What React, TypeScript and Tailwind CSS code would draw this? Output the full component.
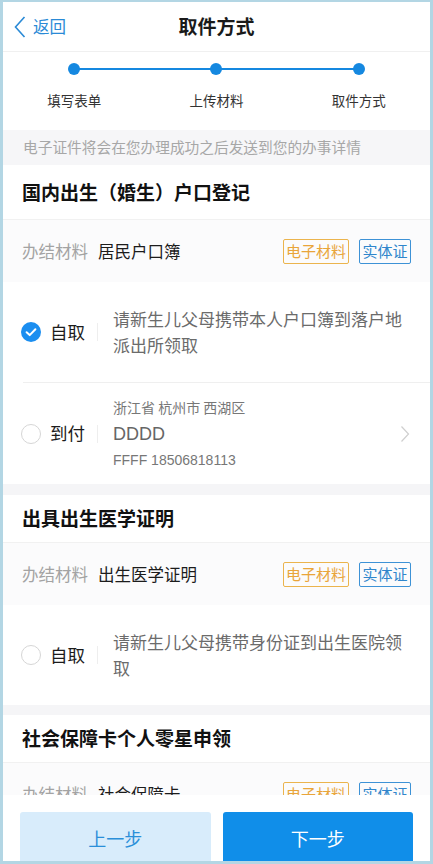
import React from 'react';

const font = { fontFamily: '"Noto Sans CJK SC", "Noto Sans", sans-serif' };

const Badges = () => (
  <div className="flex items-center gap-[10px]">
    <span className="h-[25px] w-[66px] flex items-center justify-center border border-[#ebb44d] rounded-[2px] text-[15px] text-[#e9a53a]">电子材料</span>
    <span className="h-[25px] w-[52px] flex items-center justify-center border border-[#3d92d6] rounded-[2px] text-[15px] text-[#2f86cc]">实体证</span>
  </div>
);

const Material = ({ name }: { name: string }) => (
  <div className="h-[62px] shrink-0 flex items-center justify-between pl-[19px] pr-[19px] bg-[#fbfbfc]">
    <div className="flex items-center text-[16.5px]">
      <span className="text-[#a3a3a3]">办结材料</span>
      <span className="ml-[10px] text-[#1c1c1c]">{name}</span>
    </div>
    <Badges />
  </div>
);

const Radio = ({ checked }: { checked?: boolean }) =>
  checked ? (
    <svg width="20" height="20" viewBox="0 0 20 20">
      <circle cx="10" cy="10" r="10" fill="#1b8ef0" />
      <path d="M5.6 10.2 L8.7 13.1 L14.4 7.2" fill="none" stroke="#fff" strokeWidth="2" strokeLinecap="round" strokeLinejoin="round" />
    </svg>
  ) : (
    <span className="block w-[20px] h-[20px] rounded-full border border-[#d6d6d6] bg-white" />
  );

const Option = ({ checked, label, children, height, arrow }: { checked?: boolean; label: string; children: React.ReactNode; height: number; arrow?: boolean }) => (
  <div className="shrink-0 flex items-center pl-[18px] pr-[20px]" style={{ height }}>
    <Radio checked={checked} />
    <span className="ml-[9px] text-[17.5px] text-[#1c1c1c] w-[40px]">{label}</span>
    <span className="ml-[7px] w-px h-[18px] bg-[#eeeeee]" />
    <div className="ml-[15px] flex-1">{children}</div>
    {arrow && (
      <svg width="10" height="18" viewBox="0 0 10 18" className="ml-2">
        <path d="M1.5 1.5 L8.5 9 L1.5 16.5" fill="none" stroke="#cfcfcf" strokeWidth="1.2" />
      </svg>
    )}
  </div>
);

const Title = ({ text, h }: { text: string; h: number }) => (
  <div className="shrink-0 flex items-center pl-[19px] border-b border-[#f1f1f1] bg-white" style={{ height: h }}>
    <span className="text-[19px] font-bold text-[#111]">{text}</span>
  </div>
);

export default function App() {
  return (
    <div className="w-[433px] h-[864px] box-border border-l-[3px] border-r-[3px] border-t-2 border-b-[3px] border-[#b3d6e4] bg-white flex flex-col overflow-hidden" style={font}>
      <div className="flex-1 overflow-hidden flex flex-col">
        {/* header */}
        <div className="h-[50px] shrink-0 relative flex items-center justify-center border-b border-[#f0f0f0]">
          <div className="absolute left-[11px] top-0 h-full flex items-center text-[#2a8ad6]">
            <svg width="12" height="22" viewBox="0 0 12 22">
              <path d="M10.5 1 L1.5 11 L10.5 21" fill="none" stroke="#2a8ad6" strokeWidth="1.6" />
            </svg>
            <span className="ml-[7px] text-[16.5px]">返回</span>
          </div>
          <span className="text-[19px] font-bold text-[#1a1a1a]">取件方式</span>
        </div>

        {/* steps */}
        <div className="h-[78px] shrink-0 relative">
          <div className="absolute left-[16.67%] right-[16.67%] top-[16px] h-[2px] bg-[#1588e0]" />
          <div className="grid grid-cols-3 relative">
            {['填写表单', '上传材料', '取件方式'].map((s) => (
              <div key={s} className="flex flex-col items-center">
                <span className="mt-[11px] w-[12px] h-[12px] rounded-full bg-[#1588e0]" />
                <span className="mt-[15px] text-[13.5px] text-[#333]">{s}</span>
              </div>
            ))}
          </div>
        </div>

        {/* notice */}
        <div className="h-[35px] shrink-0 flex items-center pl-[20px] bg-[#f6f6f8]">
          <span className="text-[14.7px] text-[#a7a7a7]">电子证件将会在您办理成功之后发送到您的办事详情</span>
        </div>

        <Title text="国内出生（婚生）户口登记" h={55} />
        <Material name="居民户口簿" />
        <Option checked label="自取" height={100}>
          <p className="text-[17px] leading-[26px] text-[#6b6b6b]">请新生儿父母携带本人户口簿到落户地派出所领取</p>
        </Option>
        <div className="shrink-0 ml-[20px] h-px bg-[#efefef]" />
        <Option label="到付" height={101} arrow>
          <div className="flex flex-col">
            <span className="text-[14px] leading-[20px] text-[#777]">浙江省 杭州市 西湖区</span>
            <span className="mt-[5px] text-[18px] leading-[24px] text-[#666]" style={{ fontFamily: '"Liberation Sans", sans-serif' }}>DDDD</span>
            <span className="mt-[4px] text-[14px] leading-[20px] text-[#777]" style={{ fontFamily: '"Liberation Sans", sans-serif' }}>FFFF 18506818113</span>
          </div>
        </Option>
        <div className="h-[11px] shrink-0 bg-[#f5f5f7]" />

        <Title text="出具出生医学证明" h={48} />
        <Material name="出生医学证明" />
        <Option label="自取" height={100}>
          <p className="text-[17px] leading-[26px] text-[#6b6b6b]">请新生儿父母携带身份证到出生医院领取</p>
        </Option>
        <div className="h-[10px] shrink-0 bg-[#f5f5f7]" />

        <Title text="社会保障卡个人零星申领" h={48} />
        <Material name="社会保障卡" />
      </div>

      {/* footer */}
      <div className="h-[66px] shrink-0 bg-white flex gap-[12px] px-[17px] pt-[17px] overflow-hidden">
        <button className="flex-1 h-[52px] rounded-[3px] bg-[#d8ecfb] text-[#2a8fd9] text-[18px]">上一步</button>
        <button className="flex-1 h-[52px] rounded-[3px] bg-[#108ee9] text-white text-[18px]">下一步</button>
      </div>
    </div>
  );
}
